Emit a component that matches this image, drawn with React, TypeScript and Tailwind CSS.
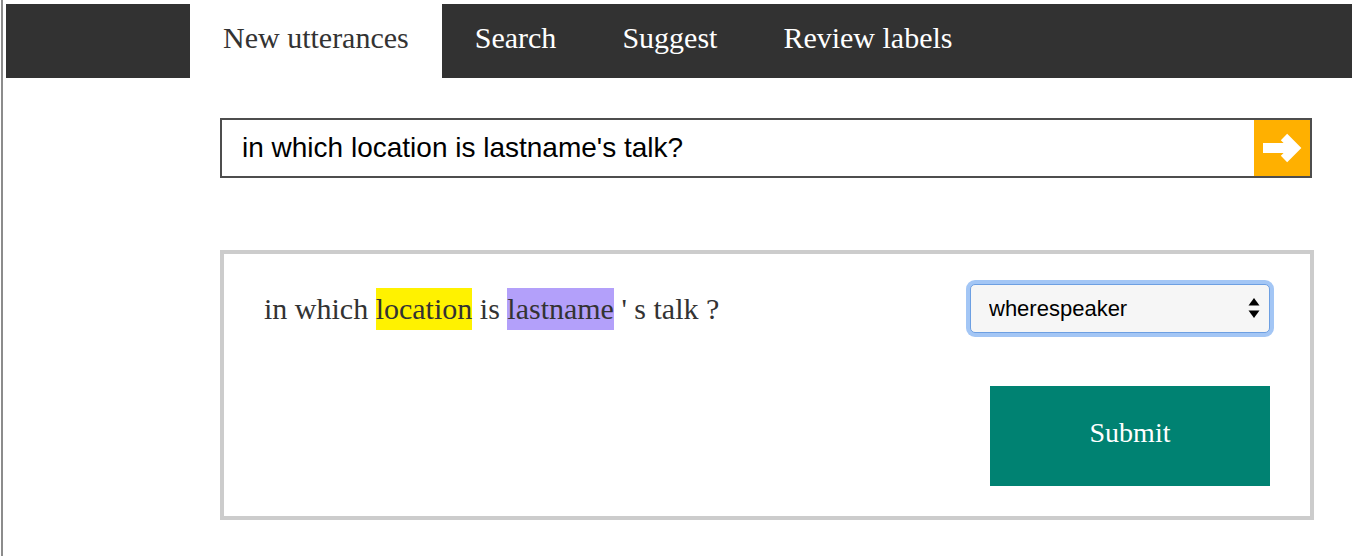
import { useState } from "react";

const tabs = ["New utterances", "Search", "Suggest", "Review labels"];

const ArrowIcon = () => (
  <svg width="40" height="30" viewBox="0 0 40 30" fill="none">
    <path d="M1 15H31" stroke="white" strokeWidth="10" />
    <path d="M22 4L33 15L22 26" stroke="white" strokeWidth="9" strokeLinejoin="miter" />
  </svg>
);

const SelectArrows = () => (
  <svg width="12" height="21" viewBox="0 0 12 21">
    <path d="M6 0L11.5 7.5H0.5Z" fill="black" />
    <path d="M0.5 12.5H11.5L6 20Z" fill="black" />
  </svg>
);

export default function App() {
  const [active, setActive] = useState(0);
  const [label, setLabel] = useState("wherespeaker");

  return (
    <div className="min-h-screen pl-[1px] bg-white">
      <div className="min-h-screen border-l-2 border-[#8c8c8c] pl-[3px] pt-[4px]">
        <nav className="flex h-[74px] bg-[#323232] pl-[184px] font-['Liberation_Serif',serif] text-[30px]">
          {tabs.map((t, i) => (
            <button
              key={t}
              onClick={() => setActive(i)}
              className={
                i === active
                  ? "flex items-center px-[33px] pb-[7px] bg-white text-[#333]"
                  : "flex items-center px-[33px] pb-[7px] text-white"
              }
            >
              {t}
            </button>
          ))}
        </nav>

        <div className="ml-[214px] pt-[40px]">
          <div className="flex w-[1092px] h-[60px] border-2 border-[#4d4d4d] bg-white">
            <input
              className="flex-1 pl-[20px] outline-none text-[28px] text-black font-['Liberation_Sans',Arial,sans-serif]"
              defaultValue="in which location is lastname's talk?"
            />
            <button className="flex w-[56px] items-center justify-center bg-[#ffb000]">
              <ArrowIcon />
            </button>
          </div>

          <div className="mt-[72px] w-[1094px] border-4 border-[#cccccc] px-10 py-[30px]">
            <div className="flex items-center justify-between">
              <p className="font-['Liberation_Serif',serif] text-[30px] text-[#333]">
                in which{" "}
                <span className="inline-block leading-[42px] bg-[#fff200]">location</span> is{" "}
                <span className="inline-block leading-[42px] bg-[#b3a0fa]">lastname</span> ' s talk ?
              </p>
              <div className="relative">
                <select
                  value={label}
                  onChange={(e) => setLabel(e.target.value)}
                  className="appearance-none w-[300px] h-[49px] rounded-[5px] border border-[#6d9fe2] bg-[#f6f6f6] pl-[18px] text-[22px] text-black font-['Liberation_Sans',Arial,sans-serif] shadow-[0_0_0_4px_#a3c6f5] outline-none"
                >
                  <option>wherespeaker</option>
                  <option>whenspeaker</option>
                  <option>whospeaker</option>
                </select>
                <span className="pointer-events-none absolute right-[10px] top-[14px]">
                  <SelectArrows />
                </span>
              </div>
            </div>
            <div className="mt-[53px] flex justify-end">
              <button className="w-[280px] h-[100px] pb-[6px] bg-[#008272] text-white text-[28px] font-['Liberation_Serif',serif]">
                Submit
              </button>
            </div>
          </div>
        </div>
      </div>
    </div>
  );
}
